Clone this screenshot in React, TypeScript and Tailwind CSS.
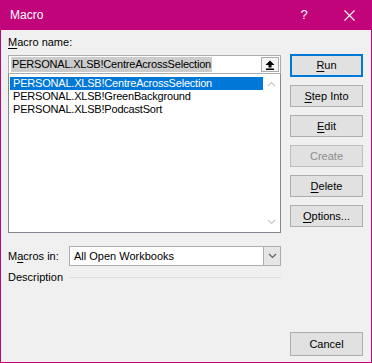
import React from "react";

const font = { fontFamily: '"Liberation Sans", Arial, sans-serif' };

function Btn({
  label,
  accessIndex,
  primary,
  disabled,
}: {
  label: string;
  accessIndex?: number;
  primary?: boolean;
  disabled?: boolean;
}) {
  const parts =
    accessIndex === undefined ? (
      label
    ) : (
      <>
        {label.slice(0, accessIndex)}
        <span className="underline underline-offset-2">{label[accessIndex]}</span>
        {label.slice(accessIndex + 1)}
      </>
    );
  return (
    <div
      className={`flex items-center justify-center w-[73px] text-[11px] ${
        primary
          ? "h-[23px] border-2 border-[#0078d7] bg-[#e1e1e1] text-black"
          : disabled
            ? "h-[22px] border border-[#bfbfbf] bg-[#e1e1e1] text-[#8c8c8c]"
            : "h-[22px] border border-[#adadad] bg-[#e1e1e1] text-black"
      }`}
    >
      {parts}
    </div>
  );
}

function Chevron({ up, color }: { up?: boolean; color: string }) {
  return (
    <svg width="9" height="6" viewBox="0 0 9 6" fill="none">
      <path
        d={up ? "M1 5 L4.5 1.5 L8 5" : "M1 1 L4.5 4.5 L8 1"}
        stroke={color}
        strokeWidth="1.2"
      />
    </svg>
  );
}

export default function App() {
  const macros = [
    "PERSONAL.XLSB!CentreAcrossSelection",
    "PERSONAL.XLSB!GreenBackground",
    "PERSONAL.XLSB!PodcastSort",
  ];

  return (
    <div
      className="w-[372px] h-[363px] flex flex-col bg-[#f0f0f0] border-x border-b border-[#c2047b] text-black"
      style={font}
    >
      {/* Title bar */}
      <div className="h-[30px] -mx-px bg-[#c2047b] flex items-center text-white text-[12px]">
        <span className="pl-[10px]">Macro</span>
        <span className="ml-auto w-[20px] text-center text-[13px]">?</span>
        <span className="w-[46px] ml-[12px] flex justify-center">
          <svg width="11" height="11" viewBox="0 0 11 11">
            <path d="M0.5 0.5 L10.5 10.5 M10.5 0.5 L0.5 10.5" stroke="white" strokeWidth="1.1" />
          </svg>
        </span>
      </div>

      <div className="flex-1 flex pl-[7px] pr-[8px]">
        {/* Left column */}
        <div className="w-[273px] flex flex-col text-[11px]">
          <div className="pt-[5px] h-[20px] leading-[15px]">
            <span className="underline underline-offset-2">M</span>acro name:
          </div>
          <div className="mt-[5px] h-[19px] bg-white border border-[#adadad] flex items-center pl-[2px] pr-[1px]">
            <span className="bg-[#cccccc] leading-[15px] px-[1px] tracking-[-0.2px]">
              PERSONAL.XLSB!CentreAcrossSelection
            </span>
            <div className="ml-auto w-[18px] h-[15px] border border-[#adadad] bg-[#f5f5f5] flex items-center justify-center">
              <svg width="10" height="10" viewBox="0 0 10 10">
                <path d="M5 0.5 L9.5 5 L6.5 5 L6.5 7.5 L3.5 7.5 L3.5 5 L0.5 5 Z" fill="black" />
                <rect x="1" y="8.5" width="8" height="1.5" fill="black" />
              </svg>
            </div>
          </div>
          <div className="h-[159px] bg-white border border-[#828790] border-t-0 flex">
            <div className="flex-1 pt-[3px] pl-[1px]">
              {macros.map((m, i) => (
                <div
                  key={m}
                  className={`h-[13px] leading-[13px] pl-[3px] tracking-[-0.2px] ${
                    i === 0 ? "bg-[#0078d7] text-white" : ""
                  }`}
                >
                  {m}
                </div>
              ))}
            </div>
            <div className="w-[17px] flex flex-col items-center justify-between py-[7px]">
              <Chevron up color="#c8c8c8" />
              <Chevron color="#c8c8c8" />
            </div>
          </div>

          <div className="mt-[13px] flex items-center h-[20px]">
            <span className="w-[61px]">
              M<span className="underline underline-offset-2">a</span>cros in:
            </span>
            <div className="flex-1 h-[20px] bg-white border border-[#adadad] flex items-center">
              <span className="pl-[4px]">All Open Workbooks</span>
              <div className="ml-auto w-[17px] h-full bg-[#e5e5e5] border-l border-[#adadad] flex items-center justify-center">
                <Chevron color="#606060" />
              </div>
            </div>
          </div>

          <div className="mt-[4px] flex items-center h-[15px]">
            <span className="pr-[6px]">Description</span>
            <div className="flex-1 h-px bg-[#dcdcdc]" />
          </div>
        </div>

        {/* Right column */}
        <div className="ml-[9px] flex flex-col pt-[24px] pb-[6px]">
          <div className="flex flex-col gap-[8px]">
            <Btn label="Run" accessIndex={0} primary />
            <Btn label="Step Into" accessIndex={0} />
            <Btn label="Edit" accessIndex={0} />
            <Btn label="Create" disabled />
            <Btn label="Delete" accessIndex={0} />
            <Btn label="Options..." accessIndex={0} />
          </div>
          <div className="mt-auto">
            <div className="flex items-center justify-center w-[73px] h-[24px] border border-[#adadad] bg-[#e1e1e1] text-[11px]">
              Cancel
            </div>
          </div>
        </div>
      </div>
    </div>
  );
}
